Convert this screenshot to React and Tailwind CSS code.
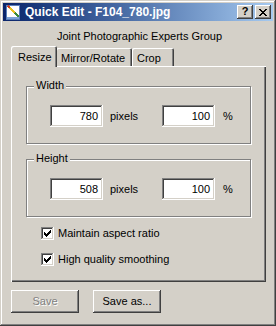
import React from "react";

const FONT = { fontFamily: '"Liberation Sans", Arial, sans-serif' };

function Field({ value }) {
  return (
    <div className="w-[53px] h-[22px] bg-white shadow-[inset_-1px_-1px_#fff,inset_1px_1px_#808080,inset_-2px_-2px_#d4d0c8,inset_2px_2px_#404040] flex items-center justify-end pr-[5px] text-[11px] text-black">
      {value}
    </div>
  );
}

function Group({ label, value, className }) {
  return (
    <div className={"relative ml-[15px] w-[225px] h-[58px] border border-[#808080] shadow-[inset_1px_1px_#fff,1px_1px_#fff] " + className}>
      <div className="absolute left-[7px] top-[-8px] px-[2px] bg-[#d4d0c8] text-[11px] leading-[13px] text-black">{label}</div>
      <div className="flex items-center pt-[18px] pl-[23px]">
        <Field value={value} />
        <span className="ml-[7px] w-[52px] text-[11px] text-black">pixels</span>
        <Field value="100" />
        <span className="ml-[8px] text-[11px] text-black">%</span>
      </div>
    </div>
  );
}

function Check({ label, className }) {
  return (
    <div className={"flex items-center ml-[30px] h-[13px] " + className}>
      <div className="w-[13px] h-[13px] bg-white shadow-[inset_-1px_-1px_#fff,inset_1px_1px_#808080,inset_-2px_-2px_#d4d0c8,inset_2px_2px_#404040] flex items-center justify-center">
        <svg width="7" height="7" viewBox="0 0 7 7" shapeRendering="crispEdges">
          <path d="M0 2h1v3h-1z M1 3h1v3h-1z M2 4h1v3h-1z M3 3h1v3h-1z M4 2h1v3h-1z M5 1h1v3h-1z M6 0h1v3h-1z" fill="#000" />
        </svg>
      </div>
      <span className="ml-[4px] text-[11px] text-black">{label}</span>
    </div>
  );
}

function Btn({ children, disabled }) {
  return (
    <div className="w-[68px] h-[23px] flex items-center justify-center shadow-[inset_-1px_-1px_#404040,inset_1px_1px_#fff,inset_-2px_-2px_#808080,inset_2px_2px_#d4d0c8] text-[11px]">
      {disabled ? (
        <span className="text-[#808080] [text-shadow:1px_1px_#fff]">{children}</span>
      ) : (
        <span className="text-black">{children}</span>
      )}
    </div>
  );
}

export default function App() {
  return (
    <div
      style={FONT}
      className="w-[276px] h-[326px] bg-[#d4d0c8] p-[3px] shadow-[inset_-1px_-1px_#404040,inset_1px_1px_#d4d0c8,inset_-2px_-2px_#808080,inset_2px_2px_#fff] flex flex-col"
    >
      {/* Title bar */}
      <div className="h-[18px] bg-linear-to-r from-[#0a246a] to-[#a6caf0] flex items-center">
        <svg className="ml-[2px]" width="16" height="16" viewBox="0 0 16 16" shapeRendering="crispEdges">
          <rect x="1" y="1" width="13" height="14" fill="#fff" stroke="#5a7fb8" strokeWidth="1" />
          <rect x="2" y="13" width="12" height="2" fill="#7da2d8" />
          <path d="M3 2 L11 10" stroke="#e8c020" strokeWidth="2" />
          <path d="M3 2 L5 4" stroke="#d04020" strokeWidth="2" />
          <path d="M10 9 L14 13" stroke="#3a8a3a" strokeWidth="2" />
        </svg>
        <span className="ml-[4px] text-white font-bold text-[12px] leading-[18px]">Quick Edit - F104_780.jpg</span>
        <div className="ml-auto mr-[2px] flex gap-[2px]">
          <div className="w-[16px] h-[14px] shadow-[inset_-1px_-1px_#404040,inset_1px_1px_#fff,inset_-2px_-2px_#808080,inset_2px_2px_#d4d0c8] bg-[#d4d0c8] flex items-center justify-center text-black font-bold text-[11px] leading-none pb-[1px]">?</div>
          <div className="w-[16px] h-[14px] shadow-[inset_-1px_-1px_#404040,inset_1px_1px_#fff,inset_-2px_-2px_#808080,inset_2px_2px_#d4d0c8] bg-[#d4d0c8] flex items-center justify-center">
            <svg width="8" height="7" viewBox="0 0 8 7" shapeRendering="crispEdges">
              <path d="M0 0h2v1h-2z M6 0h2v1h-2z M1 1h2v1h-2z M5 1h2v1h-2z M2 2h4v1h-4z M3 3h2v1h-2z M2 4h4v1h-4z M1 5h2v1h-2z M5 5h2v1h-2z M0 6h2v1h-2z M6 6h2v1h-2z" fill="#000" />
            </svg>
          </div>
        </div>
      </div>

      {/* Subtitle */}
      <div className="mt-[9px] h-[13px] leading-[13px] text-[11px] text-black text-center pl-[3px]">Joint Photographic Experts Group</div>

      {/* Tabs */}
      <div className="mt-[3px] ml-[8px] flex items-end h-[20px] text-[11px] text-black">
        <div className="relative z-10 w-[46px] h-[21px] -mb-[1px] bg-[#d4d0c8] shadow-[inset_1px_1px_#fff,inset_-1px_0_#404040,inset_-2px_0_#808080] rounded-t-[2px] pl-[7px] pt-[3px]">Resize</div>
        <div className="w-[76px] h-[18px] ml-[-1px] shadow-[inset_1px_1px_#fff,inset_-1px_0_#404040,inset_-2px_0_#808080] rounded-t-[2px] pl-[5px] pt-[2px]">Mirror/Rotate</div>
        <div className="w-[42px] h-[18px] shadow-[inset_1px_1px_#fff,inset_-1px_0_#404040,inset_-2px_0_#808080] rounded-t-[2px] pl-[5px] pt-[2px]">Crop</div>
      </div>

      {/* Panel */}
      <div className="ml-[8px] w-[255px] h-[216px] shadow-[inset_1px_1px_#fff,inset_-1px_-1px_#404040,inset_-2px_-2px_#808080] pt-[20px]">
        <Group label="Width" value="780" />
        <Group label="Height" value="508" className="mt-[15px]" />
        <Check label="Maintain aspect ratio" className="mt-[10px]" />
        <Check label="High quality smoothing" className="mt-[13px]" />
      </div>

      {/* Buttons */}
      <div className="mt-[8px] ml-[8px] flex gap-[14px]">
        <Btn disabled>Save</Btn>
        <Btn>Save as...</Btn>
      </div>
    </div>
  );
}
